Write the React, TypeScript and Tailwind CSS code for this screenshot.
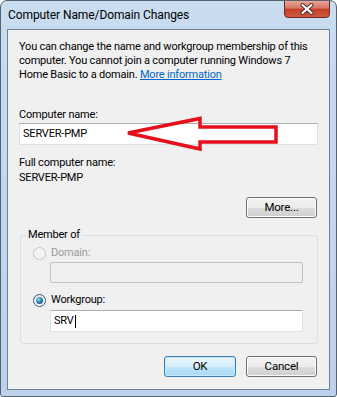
import React from "react";

const font = { fontFamily: 'Roboto, "Liberation Sans", sans-serif' };

function Btn({ children, def, className }: { children: React.ReactNode; def?: boolean; className?: string }) {
  return (
    <div
      className={
        "h-[21px] rounded-[3px] border flex items-center justify-center text-[11.5px] tracking-[-0.2px] text-black " +
        (def
          ? "border-[#3c7fb1] bg-[linear-gradient(#eaf6fd_0%,#d9f0fc_50%,#bee6fd_50%,#a7d9f5_100%)] shadow-[inset_0_0_0_1px_#c6e8fb] "
          : "border-[#707070] bg-[linear-gradient(#f2f2f2_0%,#ebebeb_50%,#dddddd_50%,#cfcfcf_100%)] shadow-[inset_0_0_0_1px_#fcfcfc] ") +
        (className ?? "")
      }
    >
      {children}
    </div>
  );
}

function Radio({ checked, disabled }: { checked?: boolean; disabled?: boolean }) {
  return (
    <div
      className={
        "w-[13px] h-[13px] rounded-full border flex items-center justify-center shrink-0 " +
        (disabled
          ? "border-[#c5c5c5] bg-[#f4f4f4]"
          : "border-[#3c5a78] bg-[linear-gradient(#e4e4e4,#ffffff)]")
      }
    >
      {checked && (
        <div className="w-[7px] h-[7px] rounded-full bg-[radial-gradient(circle_at_35%_35%,#8fd3f8,#1c6ea4_60%,#0c3f6a)]" />
      )}
    </div>
  );
}

export default function App() {
  return (
    <div
      className="relative w-[337px] h-[397px] bg-[linear-gradient(#c9dcf0,#bdd2ea)] border border-[#55636f] rounded-t-[7px] rounded-b-[3px] flex flex-col overflow-hidden"
      style={font}
    >
      {/* Title bar */}
      <div className="h-[28px] flex items-start shrink-0">
        <div className="pl-[7px] pt-[6px] text-[12px] tracking-[-0.1px] leading-[16px] text-black">
          Computer Name/Domain Changes
        </div>
        <div className="ml-auto mr-[6px] w-[46px] h-[18px] -mt-[1px] rounded-b-[4px] border border-[#6b2a22] bg-[linear-gradient(#eba596_0%,#d77562_45%,#c43f2a_50%,#cf5a40_100%)] flex items-center justify-center">
          <svg width="14" height="12" viewBox="0 0 14 12">
            <path d="M2.5 2 L11.5 10 M11.5 2 L2.5 10" stroke="#4a2a26" strokeWidth="4" strokeLinecap="round" />
            <path d="M2.5 2 L11.5 10 M11.5 2 L2.5 10" stroke="#ffffff" strokeWidth="2.2" strokeLinecap="round" />
          </svg>
        </div>
      </div>

      {/* Client area */}
      <div className="mx-[6px] h-[361px] border border-[#6f8196] bg-[#f0f0f0] flex flex-col text-[11px] tracking-[-0.2px] text-black">
        <p className="pl-[11px] pt-[10px] leading-[14px] whitespace-nowrap">
          You can change the name and workgroup membership of this
          <br />
          computer. You cannot join a computer running Windows 7
          <br />
          Home Basic to a domain.{" "}
          <span className="text-[#0066cc] underline">More information</span>
        </p>

        <div className="pl-[11px] mt-[26px] leading-[14px]">Computer name:</div>
        <div className="ml-[11px] mt-[1px] w-[299px] h-[22px] bg-white border border-[#dbdfe6] border-t-[#abadb3] flex items-center pl-[3px] leading-[14px]">
          SERVER-PMP
        </div>

        <div className="pl-[11px] mt-[10px] leading-[15px]">Full computer name:</div>
        <div className="pl-[11px] leading-[15px]">SERVER-PMP</div>

        <div className="flex justify-end mt-[12px] pr-[12px]">
          <Btn className="w-[71px]">More...</Btn>
        </div>

        {/* Group box */}
        <div className="relative ml-[12px] mt-[17px] w-[298px] h-[109px] border border-[#d5dfe5] rounded-[3px] flex flex-col">
          <span className="absolute left-[5px] -top-[8px] px-[2px] bg-[#f0f0f0] leading-[14px]">Member of</span>

          <div className="flex items-center mt-[10px] pl-[12px] leading-[14px]">
            <Radio disabled />
            <span className="ml-[5px] text-[#9a9a9a]">Domain:</span>
          </div>
          <div className="ml-[29px] mt-[2px] w-[253px] h-[21px] rounded-[2px] border border-[#c3c3c3] bg-[#f0f0f0]" />

          <div className="flex items-center mt-[10px] pl-[12px] leading-[14px]">
            <Radio checked />
            <span className="ml-[5px]">Workgroup:</span>
          </div>
          <div className="ml-[29px] mt-[3px] w-[253px] h-[22px] bg-white border border-[#dbdfe6] border-t-[#abadb3] flex items-center pl-[3px] leading-[14px]">
            SRV<span className="inline-block w-[1px] h-[13px] bg-black ml-[1px]" />
          </div>
        </div>

        <div className="flex justify-end gap-[10px] mt-[12px] pr-[12px]">
          <Btn def className="w-[72px]">OK</Btn>
          <Btn className="w-[71px]">Cancel</Btn>
        </div>
      </div>

      {/* Red annotation arrow overlay */}
      <svg className="absolute left-[-1px] top-[-1px] pointer-events-none" width="337" height="397" viewBox="0 0 337 397">
        <polygon
          points="128,133 200,118.5 200,127 276,127 276,142 200,142 200,149"
          fill="none"
          stroke="#e5101b"
          strokeWidth="3.5"
          strokeLinejoin="miter"
        />
      </svg>
    </div>
  );
}
